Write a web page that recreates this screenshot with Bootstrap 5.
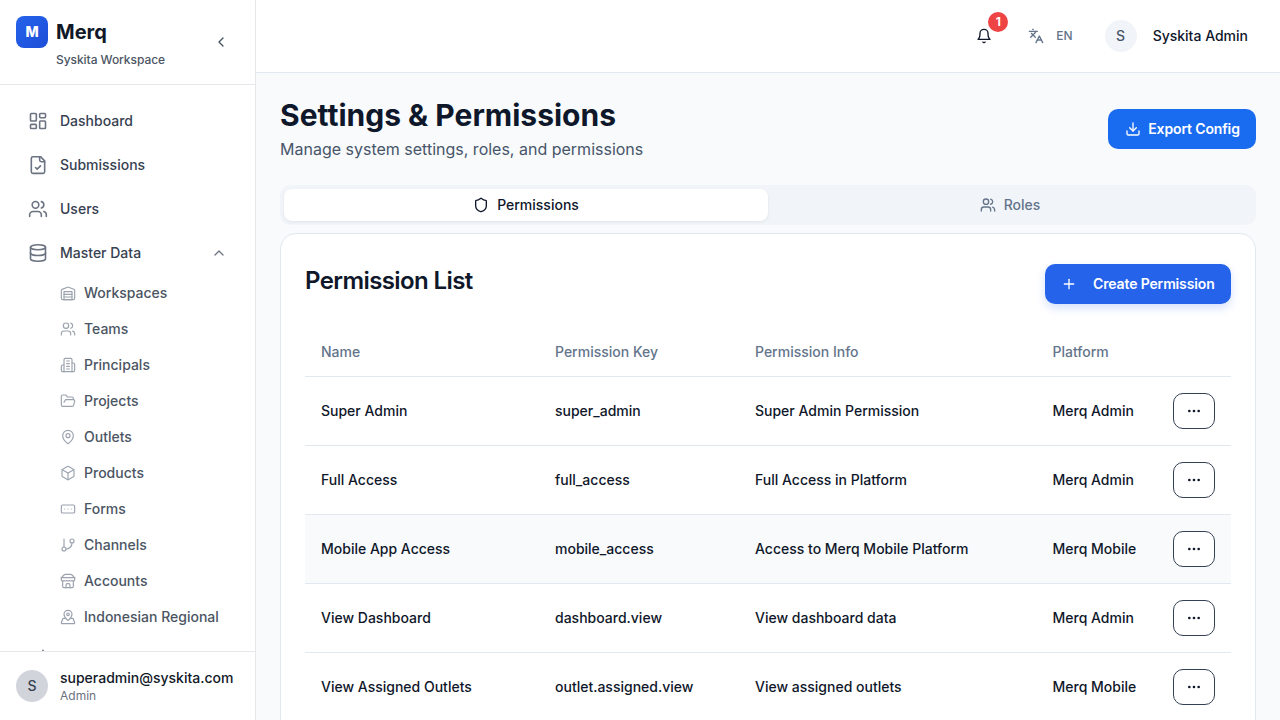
<!DOCTYPE html>
<html lang="en">
<head>
    <meta charset="UTF-8">
    <title>Merq - Settings &amp; Permissions</title>
    <link href="https://cdn.jsdelivr.net/npm/bootstrap@5.3.2/dist/css/bootstrap.min.css" rel="stylesheet">
    <style>
        html, body { height: 100%; overflow: hidden; }
        body { font-family: Inter, "Liberation Sans", sans-serif; background: #f8fafc; color: #0f172a; font-size: 14px; line-height: 20px; }
        .ico { fill: none; stroke: currentColor; stroke-width: 2; stroke-linecap: round; stroke-linejoin: round; flex-shrink: 0; }
        .app-shell { height: 720px; width: 1280px; }
        .side-bar { width: 256px; flex-shrink: 0; background: #fff; border-right: 1px solid #e5e7eb; }
        .brand-box { height: 85px; border-bottom: 1px solid #e5e7eb; padding: 16px 28px 0 16px; }
        .brand-logo { width: 32px; height: 32px; border-radius: 8px; background: linear-gradient(135deg, #2563eb, #1d4ed8); color: #fff; font-weight: 800; font-size: 14px; }
        .brand-name { font-size: 20px; font-weight: 700; line-height: 32px; color: #111827; }
        .brand-sub { font-size: 12px; font-weight: 500; color: #4b5563; margin: 4px 0 0 40px; line-height: 16px; letter-spacing: -.005em; }
        .side-nav { flex: 1; overflow: hidden; padding: 14px 12px 0; }
        .main-link { height: 44px; padding: 0 16px; gap: 12px; color: #374151; font-weight: 500; text-decoration: none; }
        .main-link .ico { color: #6b7280; stroke-width: 1.9; }
        .sub-link { height: 36px; padding-left: 48px; gap: 8px; color: #4b5563; font-weight: 500; text-decoration: none; }
        .sub-link .ico { color: #9ca3af; stroke-width: 1.75; }
        .user-foot { height: 69px; border-top: 1px solid #e5e7eb; padding: 18px 16px 0; gap: 12px; }
        .foot-avatar { width: 32px; height: 32px; background: #d1d5db; color: #374151; font-size: 14px; font-weight: 500; }
        .foot-mail { font-weight: 500; color: #111827; line-height: 16px; }
        .foot-role { font-size: 12px; color: #6b7280; line-height: 16px; margin-top: 2px; }
        .top-bar { height: 73px; background: #fff; border-bottom: 1px solid #e2e8f0; padding-right: 32px; flex-shrink: 0; }
        .bell-wrap { width: 16px; height: 16px; margin-right: 36px; color: #0f172a; }
        .bell-count { top: -16px; left: 12px; width: 20px; height: 20px; background: #ef4444; color: #fff; font-size: 12px; font-weight: 700; }
        .lang-code { font-size: 12px; font-weight: 500; color: #64748b; margin-left: 12px; margin-right: 32px; }
        .top-avatar { width: 32px; height: 32px; background: #f1f5f9; color: #475569; font-size: 14px; font-weight: 500; }
        .top-user { font-weight: 500; color: #0f172a; margin-left: 16px; }
        .page-body { padding: 24px; overflow: hidden; flex: 1; }
        .page-title { font-size: 30px; font-weight: 700; line-height: 36px; color: #0f172a; margin: 0; }
        .page-sub { font-size: 16px; line-height: 24px; color: #475569; margin: 4px 0 0; }
        .export-btn { height: 40px; width: 148px; background: #196bf0; color: #fff; border: 0; border-radius: 10px; font-size: 14px; line-height: 20px; font-weight: 600; gap: 7px; margin-top: 12px; padding: 0 0 0 1px; letter-spacing: -.01em; }
        .tab-strip { background: #f1f5f9; border-radius: 10px; padding: 4px; height: 40px; margin: 24px 0 8px; }
        .tab-item { flex: 1; height: 32px; gap: 8px; font-weight: 500; color: #64748b; border-radius: 8px; }
        .tab-item.is-on { background: #fff; color: #0f172a; box-shadow: 0 1px 3px rgba(15, 23, 42, .08); }
        .perm-card { border: 1px solid #e2e8f0; border-radius: 16px; background: #fff; padding: 30px 24px 24px; }
        .perm-title { font-size: 24px; font-weight: 600; line-height: 32px; margin: 1px 0 0; color: #0f172a; letter-spacing: -.6px; }
        .create-btn { height: 40px; width: 186px; background: #2563eb; color: #fff; border: 0; border-radius: 10px; font-size: 14px; line-height: 20px; font-weight: 600; padding: 0 0 0 16px; gap: 16px; white-space: nowrap; box-shadow: 0 4px 10px rgba(37, 99, 235, .2); letter-spacing: -.01em; }
        .perm-table { table-layout: fixed; width: 926px; margin: 24px 0 0; }
        .perm-table th { height: 48px; padding: 0 16px; font-weight: 500; color: #64748b; border-bottom: 1px solid #e2e8f0; background: transparent; vertical-align: middle; }
        .perm-table td { height: 69px; padding: 0 16px; font-weight: 500; color: #0f172a; border-bottom: 1px solid #e2e8f0; background: transparent; vertical-align: middle; }
        .perm-table td:last-child { padding-left: 15.5px; }
        .perm-table tr.row-soft td { background: #f8fafc; }
        .dots-btn { width: 42px; height: 36px; border: 1px solid #334155; border-radius: 10px; background: #fff; color: #0f172a; padding: 0; }
    </style>
</head>
<body>

<svg width="0" height="0" class="position-absolute">
    <symbol id="i-dash" viewBox="0 0 24 24"><rect x="3" y="3" width="7" height="9" rx="1"/><rect x="14" y="3" width="7" height="5" rx="1"/><rect x="14" y="12" width="7" height="9" rx="1"/><rect x="3" y="16" width="7" height="5" rx="1"/></symbol>
    <symbol id="i-file" viewBox="0 0 24 24"><path d="M15 2H6a2 2 0 0 0-2 2v16a2 2 0 0 0 2 2h12a2 2 0 0 0 2-2V7Z"/><path d="M14 2v4a2 2 0 0 0 2 2h4"/><path d="m9 15 2 2 4-4"/></symbol>
    <symbol id="i-users" viewBox="0 0 24 24"><path d="M16 21v-2a4 4 0 0 0-4-4H6a4 4 0 0 0-4 4v2"/><circle cx="9" cy="7" r="4"/><path d="M22 21v-2a4 4 0 0 0-3-3.87"/><path d="M16 3.13a4 4 0 0 1 0 7.75"/></symbol>
    <symbol id="i-db" viewBox="0 0 24 24"><ellipse cx="12" cy="5" rx="9" ry="3"/><path d="M3 5V19A9 3 0 0 0 21 19V5"/><path d="M3 12A9 3 0 0 0 21 12"/></symbol>
    <symbol id="i-ware" viewBox="0 0 24 24"><path d="M22 8.35V20a2 2 0 0 1-2 2H4a2 2 0 0 1-2-2V8.35A2 2 0 0 1 3.26 6.5l8-3.2a2 2 0 0 1 1.48 0l8 3.2A2 2 0 0 1 22 8.35Z"/><path d="M6 18h12"/><path d="M6 14h12"/><rect x="6" y="10" width="12" height="12"/></symbol>
    <symbol id="i-build" viewBox="0 0 24 24"><path d="M6 22V4a2 2 0 0 1 2-2h8a2 2 0 0 1 2 2v18Z"/><path d="M6 12H4a2 2 0 0 0-2 2v6a2 2 0 0 0 2 2h2"/><path d="M18 9h2a2 2 0 0 1 2 2v9a2 2 0 0 1-2 2h-2"/><path d="M10 6h4"/><path d="M10 10h4"/><path d="M10 14h4"/><path d="M10 18h4"/></symbol>
    <symbol id="i-folder" viewBox="0 0 24 24"><path d="m6 14 1.5-2.9A2 2 0 0 1 9.24 10H20a2 2 0 0 1 1.94 2.5l-1.54 6a2 2 0 0 1-1.95 1.5H4a2 2 0 0 1-2-2V5a2 2 0 0 1 2-2h3.9a2 2 0 0 1 1.69.9l.81 1.2a2 2 0 0 0 1.67.9H18a2 2 0 0 1 2 2v2"/></symbol>
    <symbol id="i-pin" viewBox="0 0 24 24"><path d="M20 10c0 6-8 12-8 12s-8-6-8-12a8 8 0 0 1 16 0Z"/><circle cx="12" cy="10" r="3"/></symbol>
    <symbol id="i-box" viewBox="0 0 24 24"><path d="M21 8a2 2 0 0 0-1-1.73l-7-4a2 2 0 0 0-2 0l-7 4A2 2 0 0 0 3 8v8a2 2 0 0 0 1 1.73l7 4a2 2 0 0 0 2 0l7-4A2 2 0 0 0 21 16Z"/><path d="m3.3 7 8.7 5 8.7-5"/><path d="M12 22V12"/></symbol>
    <symbol id="i-form" viewBox="0 0 24 24"><rect x="2" y="6" width="20" height="12" rx="2"/><path d="M12 12h.01"/><path d="M17 12h.01"/><path d="M7 12h.01"/></symbol>
    <symbol id="i-branch" viewBox="0 0 24 24"><path d="M6 3v12"/><circle cx="18" cy="6" r="3"/><circle cx="6" cy="18" r="3"/><path d="M18 9a9 9 0 0 1-9 9"/></symbol>
    <symbol id="i-store" viewBox="0 0 24 24"><path d="m2 7 4.41-4.41A2 2 0 0 1 7.83 2h8.34a2 2 0 0 1 1.42.59L22 7"/><path d="M4 12v8a2 2 0 0 0 2 2h12a2 2 0 0 0 2-2v-8"/><path d="M15 22v-4a2 2 0 0 0-2-2h-2a2 2 0 0 0-2 2v4"/><path d="M2 7h20"/><path d="M22 7v3a2 2 0 0 1-2 2a2.7 2.7 0 0 1-1.59-.63.7.7 0 0 0-.82 0A2.7 2.7 0 0 1 16 12a2.7 2.7 0 0 1-1.59-.63.7.7 0 0 0-.82 0A2.7 2.7 0 0 1 12 12a2.7 2.7 0 0 1-1.59-.63.7.7 0 0 0-.82 0A2.7 2.7 0 0 1 8 12a2.7 2.7 0 0 1-1.59-.63.7.7 0 0 0-.82 0A2.7 2.7 0 0 1 4 12a2 2 0 0 1-2-2V7"/></symbol>
    <symbol id="i-region" viewBox="0 0 24 24"><path d="M18 8c0 3.613-3.869 7.429-5.393 8.795a1 1 0 0 1-1.214 0C9.87 15.429 6 11.613 6 8a6 6 0 0 1 12 0"/><circle cx="12" cy="8" r="2"/><path d="M8.714 14h-3.71a1 1 0 0 0-.948.683l-2.004 6A1 1 0 0 0 3 22h18a1 1 0 0 0 .948-1.316l-2-6a1 1 0 0 0-.949-.684h-3.712"/></symbol>
    <symbol id="i-bell" viewBox="0 0 24 24"><path d="M6 8a6 6 0 0 1 12 0c0 7 3 9 3 9H3s3-2 3-9"/><path d="M10.3 21a1.94 1.94 0 0 0 3.4 0"/></symbol>
    <symbol id="i-lang" viewBox="0 0 24 24"><path d="m5 8 6 6"/><path d="m4 14 6-6 2-3"/><path d="M2 5h12"/><path d="M7 2h1"/><path d="m22 22-5-10-5 10"/><path d="M14 18h6"/></symbol>
    <symbol id="i-down" viewBox="0 0 24 24"><path d="M21 15v4a2 2 0 0 1-2 2H5a2 2 0 0 1-2-2v-4"/><path d="m7 10 5 5 5-5"/><path d="M12 15V3"/></symbol>
    <symbol id="i-shield" viewBox="0 0 24 24"><path d="M20 13c0 5-3.5 7.5-7.66 8.95a1 1 0 0 1-.67-.01C7.5 20.5 4 18 4 13V6a1 1 0 0 1 1-1c2 0 4.5-1.2 6.24-2.72a1.17 1.17 0 0 1 1.52 0C14.51 3.81 17 5 19 5a1 1 0 0 1 1 1z"/></symbol>
    <symbol id="i-plus" viewBox="0 0 24 24"><path d="M5 12h14"/><path d="M12 5v14"/></symbol>
    <symbol id="i-dots" viewBox="0 0 24 24"><circle cx="12" cy="12" r="1"/><circle cx="19" cy="12" r="1"/><circle cx="5" cy="12" r="1"/></symbol>
    <symbol id="i-left" viewBox="0 0 24 24"><path d="m15 18-6-6 6-6"/></symbol>
    <symbol id="i-up" viewBox="0 0 24 24"><path d="m18 15-6-6-6 6"/></symbol>
    <symbol id="i-tip" viewBox="0 0 24 24"><path d="M18 4v16"/></symbol>
</svg>

<div class="app-shell d-flex">
    <aside class="side-bar d-flex flex-column">
        <div class="brand-box position-relative">
            <div class="d-flex align-items-center gap-2">
                <div class="brand-logo d-flex align-items-center justify-content-center">M</div>
                <div class="brand-name">Merq</div>
            </div>
            <div class="brand-sub">Syskita Workspace</div>
            <svg class="ico position-absolute" width="16" height="16" style="left: 213px; top: 34px; color: #4b5563;"><use href="#i-left"/></svg>
        </div>
        <nav class="side-nav">
            <a href="#" class="main-link d-flex align-items-center"><svg class="ico" width="20" height="20"><use href="#i-dash"/></svg>Dashboard</a>
            <a href="#" class="main-link d-flex align-items-center"><svg class="ico" width="20" height="20"><use href="#i-file"/></svg>Submissions</a>
            <a href="#" class="main-link d-flex align-items-center"><svg class="ico" width="20" height="20"><use href="#i-users"/></svg>Users</a>
            <a href="#" class="main-link d-flex align-items-center"><svg class="ico" width="20" height="20"><use href="#i-db"/></svg>Master Data<svg class="ico ms-auto" width="16" height="16"><use href="#i-up"/></svg></a>
            <a href="#" class="sub-link d-flex align-items-center"><svg class="ico" width="16" height="16"><use href="#i-ware"/></svg>Workspaces</a>
            <a href="#" class="sub-link d-flex align-items-center"><svg class="ico" width="16" height="16"><use href="#i-users"/></svg>Teams</a>
            <a href="#" class="sub-link d-flex align-items-center"><svg class="ico" width="16" height="16"><use href="#i-build"/></svg>Principals</a>
            <a href="#" class="sub-link d-flex align-items-center"><svg class="ico" width="16" height="16"><use href="#i-folder"/></svg>Projects</a>
            <a href="#" class="sub-link d-flex align-items-center"><svg class="ico" width="16" height="16"><use href="#i-pin"/></svg>Outlets</a>
            <a href="#" class="sub-link d-flex align-items-center"><svg class="ico" width="16" height="16"><use href="#i-box"/></svg>Products</a>
            <a href="#" class="sub-link d-flex align-items-center"><svg class="ico" width="16" height="16"><use href="#i-form"/></svg>Forms</a>
            <a href="#" class="sub-link d-flex align-items-center"><svg class="ico" width="16" height="16"><use href="#i-branch"/></svg>Channels</a>
            <a href="#" class="sub-link d-flex align-items-center"><svg class="ico" width="16" height="16"><use href="#i-store"/></svg>Accounts</a>
            <a href="#" class="sub-link d-flex align-items-center"><svg class="ico" width="16" height="16"><use href="#i-region"/></svg>Indonesian Regional</a>
            <a href="#" class="main-link d-flex align-items-center"><svg class="ico" width="20" height="20"><use href="#i-tip"/></svg></a>
        </nav>
        <div class="user-foot d-flex">
            <div class="foot-avatar rounded-circle d-flex align-items-center justify-content-center">S</div>
            <div>
                <div class="foot-mail">superadmin@syskita.com</div>
                <div class="foot-role">Admin</div>
            </div>
        </div>
    </aside>

    <div class="flex-grow-1 d-flex flex-column" style="min-width: 0;">
        <header class="top-bar d-flex align-items-center justify-content-end">
            <div class="bell-wrap position-relative">
                <svg class="ico d-block" width="16" height="16"><use href="#i-bell"/></svg>
                <span class="bell-count position-absolute rounded-circle d-flex align-items-center justify-content-center">1</span>
            </div>
            <svg class="ico" width="16" height="16" style="color: #64748b;"><use href="#i-lang"/></svg>
            <span class="lang-code">EN</span>
            <div class="top-avatar rounded-circle d-flex align-items-center justify-content-center">S</div>
            <span class="top-user">Syskita Admin</span>
        </header>

        <main class="page-body">
            <div class="d-flex justify-content-between align-items-start">
                <div>
                    <h1 class="page-title">Settings &amp; Permissions</h1>
                    <p class="page-sub">Manage system settings, roles, and permissions</p>
                </div>
                <button class="export-btn btn d-flex align-items-center justify-content-center"><svg class="ico" width="16" height="16"><use href="#i-down"/></svg>Export Config</button>
            </div>

            <div class="tab-strip d-flex">
                <div class="tab-item is-on d-flex align-items-center justify-content-center"><svg class="ico" width="16" height="16"><use href="#i-shield"/></svg>Permissions</div>
                <div class="tab-item d-flex align-items-center justify-content-center"><svg class="ico" width="16" height="16"><use href="#i-users"/></svg>Roles</div>
            </div>

            <section class="perm-card">
                <div class="d-flex justify-content-between align-items-start">
                    <h2 class="perm-title">Permission List</h2>
                    <button class="create-btn btn d-flex align-items-center"><svg class="ico" width="16" height="16"><use href="#i-plus"/></svg>Create Permission</button>
                </div>
                <table class="table perm-table">
                    <colgroup><col style="width: 234px"><col style="width: 200px"><col style="width: 297.5px"><col style="width: 121px"><col style="width: 73.5px"></colgroup>
                    <thead>
                        <tr><th>Name</th><th>Permission Key</th><th>Permission Info</th><th>Platform</th><th></th></tr>
                    </thead>
                    <tbody>
                        <tr><td>Super Admin</td><td>super_admin</td><td>Super Admin Permission</td><td>Merq Admin</td><td><button class="dots-btn d-flex align-items-center justify-content-center"><svg class="ico" width="16" height="16"><use href="#i-dots"/></svg></button></td></tr>
                        <tr><td>Full Access</td><td>full_access</td><td>Full Access in Platform</td><td>Merq Admin</td><td><button class="dots-btn d-flex align-items-center justify-content-center"><svg class="ico" width="16" height="16"><use href="#i-dots"/></svg></button></td></tr>
                        <tr class="row-soft"><td>Mobile App Access</td><td>mobile_access</td><td>Access to Merq Mobile Platform</td><td>Merq Mobile</td><td><button class="dots-btn d-flex align-items-center justify-content-center"><svg class="ico" width="16" height="16"><use href="#i-dots"/></svg></button></td></tr>
                        <tr><td>View Dashboard</td><td>dashboard.view</td><td>View dashboard data</td><td>Merq Admin</td><td><button class="dots-btn d-flex align-items-center justify-content-center"><svg class="ico" width="16" height="16"><use href="#i-dots"/></svg></button></td></tr>
                        <tr><td>View Assigned Outlets</td><td>outlet.assigned.view</td><td>View assigned outlets</td><td>Merq Mobile</td><td><button class="dots-btn d-flex align-items-center justify-content-center"><svg class="ico" width="16" height="16"><use href="#i-dots"/></svg></button></td></tr>
                    </tbody>
                </table>
            </section>
        </main>
    </div>
</div>

<script src="https://cdn.jsdelivr.net/npm/bootstrap@5.3.2/dist/js/bootstrap.bundle.min.js"></script>
</body>
</html>
